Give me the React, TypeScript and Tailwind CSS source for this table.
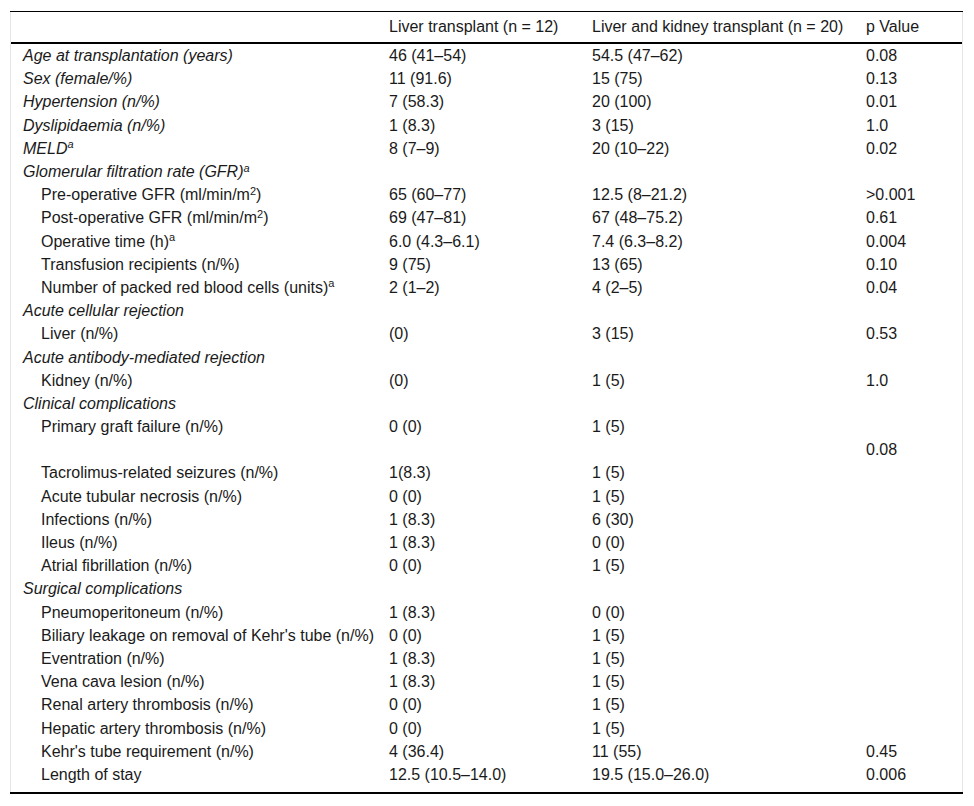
type Row = {
  label: React.ReactNode;
  a?: string;
  b?: string;
  p?: string;
  kind?: "main" | "group" | "sub" | "blank";
};

const Sup = ({ children }: { children: React.ReactNode }) => (
  <sup className="text-[11px]">{children}</sup>
);

const rows: Row[] = [
  { label: "Age at transplantation (years)", a: "46 (41–54)", b: "54.5 (47–62)", p: "0.08", kind: "main" },
  { label: "Sex (female/%)", a: "11 (91.6)", b: "15 (75)", p: "0.13", kind: "main" },
  { label: "Hypertension (n/%)", a: "7 (58.3)", b: "20 (100)", p: "0.01", kind: "main" },
  { label: "Dyslipidaemia (n/%)", a: "1 (8.3)", b: "3 (15)", p: "1.0", kind: "main" },
  { label: <>MELD<Sup>a</Sup></>, a: "8 (7–9)", b: "20 (10–22)", p: "0.02", kind: "main" },
  { label: <>Glomerular filtration rate (GFR)<Sup>a</Sup></>, kind: "group" },
  { label: <>Pre-operative GFR (ml/min/m<Sup>2</Sup>)</>, a: "65 (60–77)", b: "12.5 (8–21.2)", p: ">0.001", kind: "sub" },
  { label: <>Post-operative GFR (ml/min/m<Sup>2</Sup>)</>, a: "69 (47–81)", b: "67 (48–75.2)", p: "0.61", kind: "sub" },
  { label: <>Operative time (h)<Sup>a</Sup></>, a: "6.0 (4.3–6.1)", b: "7.4 (6.3–8.2)", p: "0.004", kind: "sub" },
  { label: "Transfusion recipients (n/%)", a: "9 (75)", b: "13 (65)", p: "0.10", kind: "sub" },
  { label: <>Number of packed red blood cells (units)<Sup>a</Sup></>, a: "2 (1–2)", b: "4 (2–5)", p: "0.04", kind: "sub" },
  { label: "Acute cellular rejection", kind: "group" },
  { label: "Liver (n/%)", a: "(0)", b: "3 (15)", p: "0.53", kind: "sub" },
  { label: "Acute antibody-mediated rejection", kind: "group" },
  { label: "Kidney (n/%)", a: "(0)", b: "1 (5)", p: "1.0", kind: "sub" },
  { label: "Clinical complications", kind: "group" },
  { label: "Primary graft failure (n/%)", a: "0 (0)", b: "1 (5)", kind: "sub" },
  { label: "", p: "0.08", kind: "blank" },
  { label: "Tacrolimus-related seizures (n/%)", a: "1(8.3)", b: "1 (5)", kind: "sub" },
  { label: "Acute tubular necrosis (n/%)", a: "0 (0)", b: "1 (5)", kind: "sub" },
  { label: "Infections (n/%)", a: "1 (8.3)", b: "6 (30)", kind: "sub" },
  { label: "Ileus (n/%)", a: "1 (8.3)", b: "0 (0)", kind: "sub" },
  { label: "Atrial fibrillation (n/%)", a: "0 (0)", b: "1 (5)", kind: "sub" },
  { label: "Surgical complications", kind: "group" },
  { label: "Pneumoperitoneum (n/%)", a: "1 (8.3)", b: "0 (0)", kind: "sub" },
  { label: "Biliary leakage on removal of Kehr's tube (n/%)", a: "0 (0)", b: "1 (5)", kind: "sub" },
  { label: "Eventration (n/%)", a: "1 (8.3)", b: "1 (5)", kind: "sub" },
  { label: "Vena cava lesion (n/%)", a: "1 (8.3)", b: "1 (5)", kind: "sub" },
  { label: "Renal artery thrombosis (n/%)", a: "0 (0)", b: "1 (5)", kind: "sub" },
  { label: "Hepatic artery thrombosis (n/%)", a: "0 (0)", b: "1 (5)", kind: "sub" },
  { label: "Kehr's tube requirement (n/%)", a: "4 (36.4)", b: "11 (55)", p: "0.45", kind: "sub" },
  { label: "Length of stay", a: "12.5 (10.5–14.0)", b: "19.5 (15.0–26.0)", p: "0.006", kind: "sub" },
];

const cols = "grid grid-cols-[366px_203px_274px_110px]";

export default function App() {
  return (
    <div className="bg-white min-h-[806px] pt-[11px] pl-[10px] font-['Liberation_Sans',Arial,sans-serif] text-[16px] text-[#1a1a1a]">
      <div className="w-[953px] border-t border-black border-b-2 border-b-black">
        <div className="border-x border-[#e6e6e6] pb-[6px]">
          <div className={`${cols} h-[32px] items-center border-b-2 border-black`}>
            <div />
            <div className="px-3 whitespace-nowrap">Liver transplant (n = 12)</div>
            <div className="px-3 whitespace-nowrap">Liver and kidney transplant (n = 20)</div>
            <div className="px-3 whitespace-nowrap">p Value</div>
          </div>
          {rows.map((r, i) => (
            <div key={i} className={`${cols} h-[23.2px] items-center leading-[18px] pt-[1px]`}>
              <div
                className={
                  r.kind === "sub"
                    ? "pl-[30px] pr-3 whitespace-nowrap"
                    : "pl-3 pr-3 italic whitespace-nowrap"
                }
              >
                {r.label}
              </div>
              <div className="px-3 whitespace-nowrap">{r.a}</div>
              <div className="px-3 whitespace-nowrap">{r.b}</div>
              <div className="px-3 whitespace-nowrap">{r.p}</div>
            </div>
          ))}
        </div>
      </div>
    </div>
  );
}
